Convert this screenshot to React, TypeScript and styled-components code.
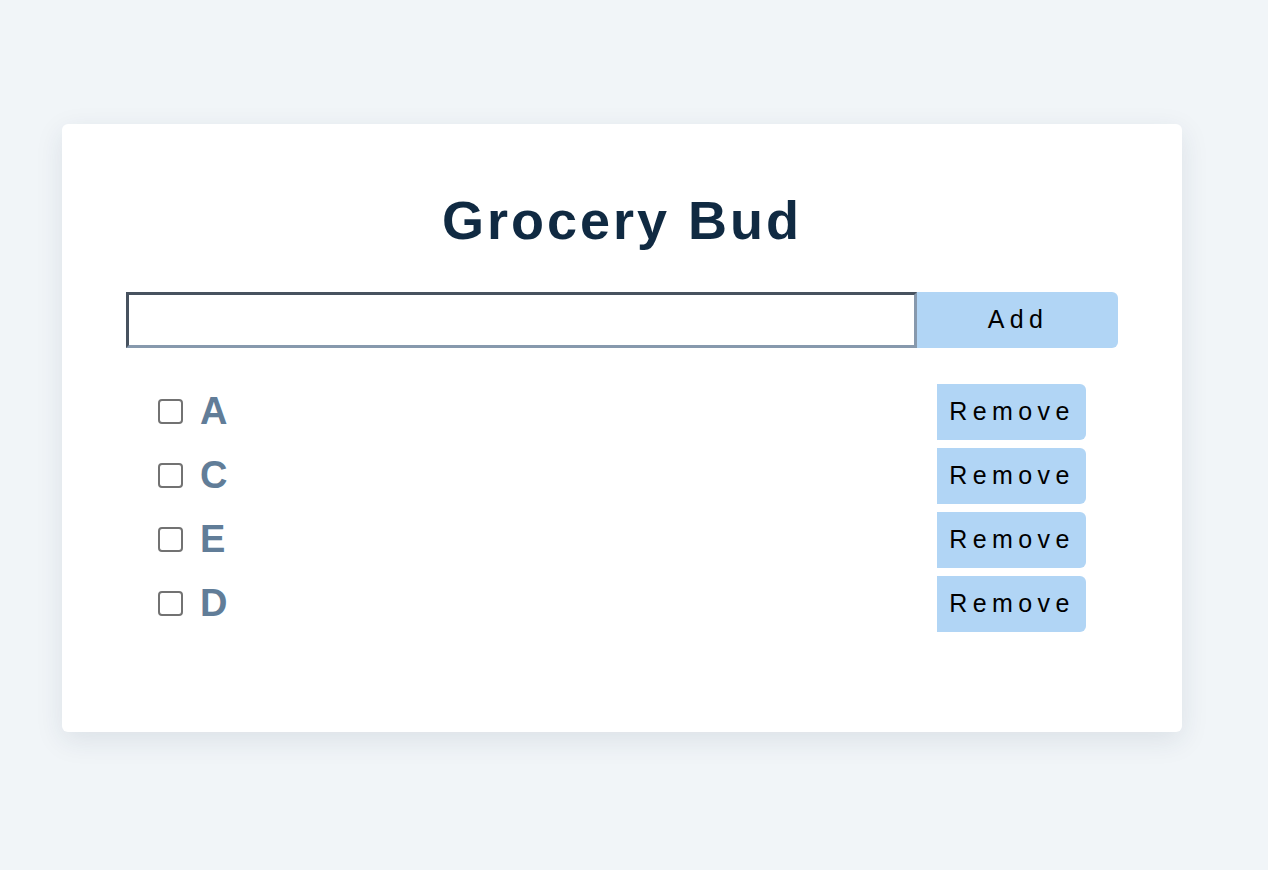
import { useState } from 'react';
import styled, { createGlobalStyle } from 'styled-components';

const GlobalStyle = createGlobalStyle`
  * {
    box-sizing: border-box;
  }
  body {
    margin: 0;
    background: #f1f5f8;
    font-family: 'Liberation Sans', Arial, Helvetica, sans-serif;
  }
`;

const Page = styled.main`
  min-height: 870px;
  padding: 124px 86px 0 62px;
`;

const Card = styled.section`
  width: 1120px;
  min-height: 608px;
  background: #fff;
  border-radius: 6px;
  box-shadow: 0 8px 28px rgba(30, 50, 80, 0.1);
  padding: 64px 64px 100px;
`;

const Title = styled.h3`
  margin: 0 0 39px;
  text-align: center;
  color: #102a42;
  font-size: 54px;
  font-weight: 700;
  letter-spacing: 3px;
  line-height: 1.2;
`;

const Form = styled.form`
  display: flex;
  height: 56px;
  margin-bottom: 36px;
`;

const Input = styled.input`
  flex: 1;
  height: 56px;
  border-style: solid;
  border-width: 3px;
  border-color: #47525f #8799ad #8799ad #47525f;
  background: #fff;
  font-family: inherit;
  font-size: 20px;
  padding: 0 12px;
  outline: none;
`;

const Button = styled.button<{ $wide?: boolean }>`
  width: ${p => (p.$wide ? '201px' : '149px')};
  height: 56px;
  border: none;
  background: #b1d5f5;
  border-radius: 0 6px 6px 0;
  color: #000;
  font-family: inherit;
  font-size: 25px;
  letter-spacing: 5.4px;
  padding: 0 0 0 1px;
  cursor: pointer;
`;

const List = styled.ul`
  list-style: none;
  margin: 0;
  padding: 0 32px;
  display: flex;
  flex-direction: column;
  gap: 8px;
`;

const Row = styled.li`
  display: flex;
  align-items: center;
  height: 56px;
`;

const Check = styled.input`
  appearance: none;
  width: 25px;
  height: 25px;
  margin: 0 17px 0 0;
  border: 2px solid #727272;
  border-radius: 4px;
  background: #fff;
  &:checked {
    background: #617d98;
  }
`;

const Name = styled.span<{ $done: boolean }>`
  flex: 1;
  color: #617d98;
  font-size: 38px;
  font-weight: 700;
  text-decoration: ${p => (p.$done ? 'line-through' : 'none')};
`;

const initial = ['A', 'C', 'E', 'D'];

export default function App() {
  const [items, setItems] = useState(initial.map(name => ({ name, done: false })));
  const [value, setValue] = useState('');

  return (
    <>
      <GlobalStyle />
      <Page>
        <Card>
          <Title>Grocery Bud</Title>
          <Form
            onSubmit={e => {
              e.preventDefault();
              if (!value.trim()) return;
              setItems(prev => [...prev, { name: value, done: false }]);
              setValue('');
            }}
          >
            <Input value={value} onChange={e => setValue(e.target.value)} />
            <Button $wide type="submit">
              Add
            </Button>
          </Form>
          <List>
            {items.map((item, i) => (
              <Row key={item.name + i}>
                <Check
                  type="checkbox"
                  checked={item.done}
                  onChange={() =>
                    setItems(prev =>
                      prev.map((it, j) => (j === i ? { ...it, done: !it.done } : it)),
                    )
                  }
                />
                <Name $done={item.done}>{item.name}</Name>
                <Button type="button" onClick={() => setItems(prev => prev.filter((_, j) => j !== i))}>
                  Remove
                </Button>
              </Row>
            ))}
          </List>
        </Card>
      </Page>
    </>
  );
}
